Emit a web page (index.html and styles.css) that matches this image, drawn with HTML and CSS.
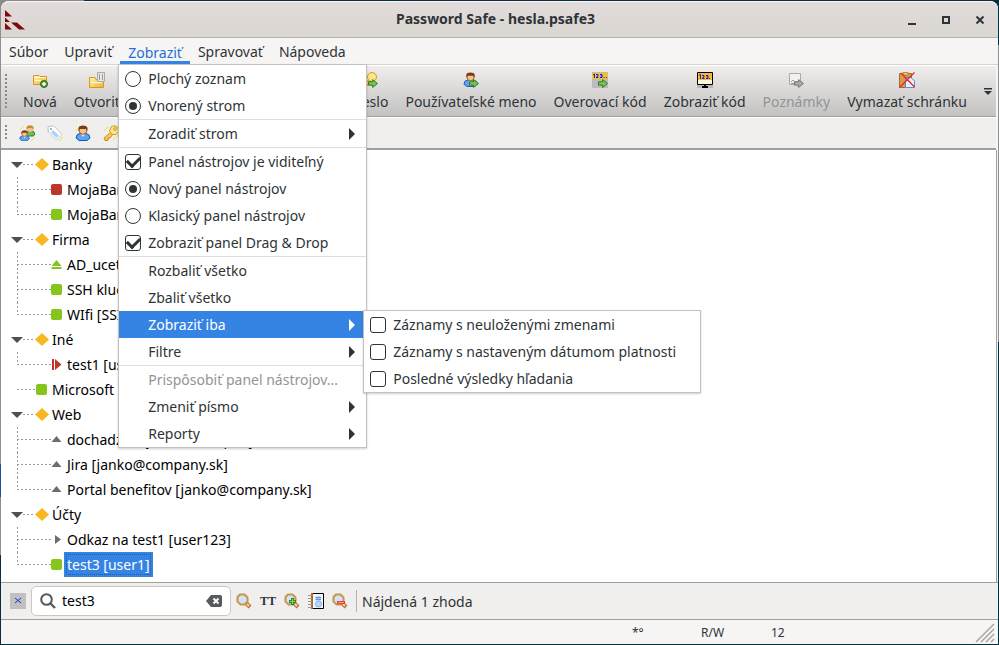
FILE: index.html
```html
<!DOCTYPE html>
<html lang="sk">
<head>
<meta charset="utf-8">
<title>Password Safe - hesla.psafe3</title>
<link rel="stylesheet" href="styles.css">
</head>
<body>
<svg class="defs" aria-hidden="true">
  <defs>
    <linearGradient id="gold" x1="0" y1="0" x2="1" y2="1"><stop offset="0" stop-color="#fff3b0"/><stop offset="1" stop-color="#f0b428"/></linearGradient>
    <symbol id="arrow" viewBox="0 0 10 9"><path d="M.5 2.8H4.6V.6L9.5 4.5 4.6 8.4V6.2H.5Z" fill="#7cc255" stroke="#2f7d1e"/></symbol>
    <symbol id="head" viewBox="0 0 16 16"><path d="M1 13Q1 9 5 8.500H11Q15 9 15 13L12 15.500H4Z" fill="#5aa5f2" stroke="#1b56b8"/><path d="M6 9L8 12 10 9Z" fill="#e9f2fc"/><circle cx="8" cy="5.500" r="3.800" fill="#f6c08c" stroke="#9a5a24"/><path d="M3.500 6V3Q4 .5 8 .5T12.500 3V6L11 4H5Z" fill="#7a3d14"/></symbol>
    <symbol id="lens" viewBox="0 0 16 16"><path d="M9.500 9.500L14 14" stroke="#b87333" stroke-width="4"/><path d="M11 11L13 13" stroke="#f6dc9a" stroke-width="2"/><path d="M4 1.500H8.500L11.500 4.500V8.500L8.500 11.500H4.500L1.500 8.500V4Z" fill="#cfe4f7" stroke="#c8964a" stroke-width="2"/></symbol>
  </defs>
</svg>
<main class="window">
  <header class="titlebar">
    <svg class="logo" viewBox="0 0 20 20" aria-hidden="true"><path d="M0 0L7 6.500H0ZM0 7.500L5 12H0ZM0 13L7 19.500H0ZM6 12.500H12L20 19.500H14Z" fill="#800a0a"/></svg>
    <h1>Password Safe - hesla.psafe3</h1>
    <div class="controls">
      <button aria-label="Minimalizovať"><svg viewBox="0 0 12 12"><path d="M2 9H10V11H2Z"/></svg></button>
      <button aria-label="Maximalizovať"><svg viewBox="0 0 12 12"><path fill-rule="evenodd" d="M2 2H10V10H2ZM4 4V8H8V4Z"/></svg></button>
      <button aria-label="Zavrieť"><svg viewBox="0 0 12 12"><path d="M2.500 2.500L9.500 9.500M9.500 2.500L2.500 9.500" stroke="#2e3436" stroke-width="2"/></svg></button>
    </div>
  </header>

  <nav class="menubar">
    <button>Súbor</button><button>Upraviť</button>
    <div class="open"><button class="active">Zobraziť</button>
      <div class="menu">
        <label class="item"><input type="radio" name="view"><span>Plochý zoznam</span></label>
        <label class="item"><input type="radio" name="view" checked><span>Vnorený strom</span></label>
        <hr>
        <button class="item sub">Zoradiť strom</button>
        <hr>
        <label class="item"><input type="checkbox" checked><span>Panel nástrojov je viditeľný</span></label>
        <label class="item"><input type="radio" name="bar" checked><span>Nový panel nástrojov</span></label>
        <label class="item"><input type="radio" name="bar"><span>Klasický panel nástrojov</span></label>
        <label class="item"><input type="checkbox" checked><span>Zobraziť panel Drag &amp; Drop</span></label>
        <hr>
        <button class="item">Rozbaliť všetko</button>
        <button class="item">Zbaliť všetko</button>
        <div class="open">
          <button class="item sub selected">Zobraziť iba</button>
          <div class="menu submenu">
            <label class="item"><input type="checkbox"><span>Záznamy s neuloženými zmenami</span></label>
            <label class="item"><input type="checkbox"><span>Záznamy s nastaveným dátumom platnosti</span></label>
            <label class="item"><input type="checkbox"><span>Posledné výsledky hľadania</span></label>
          </div>
        </div>
        <button class="item sub">Filtre</button>
        <hr>
        <button class="item" disabled>Prispôsobiť panel nástrojov...</button>
        <button class="item sub">Zmeniť písmo</button>
        <button class="item sub">Reporty</button>
      </div>
    </div>
    <button>Spravovať</button><button>Nápoveda</button>
  </nav>

  <div class="toolbar">
    <i class="grip"></i>
    <div class="group">
      <button><svg viewBox="0 0 16 16"><path d="M1.500 12.500V3.500H7L8 4.500H14.500V12.500Z" fill="url(#gold)" stroke="#d39a22"/><path d="M2 5.500H14M3 8.500H9" stroke="#fffbe2"/><circle cx="12" cy="12" r="3.500" fill="#4d9a35" stroke="#2d6b1e"/><path d="M10 12H14M12 10V14" stroke="#fff" stroke-width="1.500"/></svg>Nová</button>
      <button><svg viewBox="0 0 16 16"><path d="M.5 15.500V5.500H6L7 7.500H14.500V15.500Z" fill="url(#gold)" stroke="#d39a22"/><path d="M8.500 .5H15.500V9.500H8.500Z" fill="#e8e8e8" stroke="#aaa"/><path d="M10.500 2V8M13.500 2V8" stroke="#999"/><path d="M2 10.500H13" stroke="#fffbe2"/></svg>Otvoriť</button>
    </div>
    <div class="group">
      <button><svg viewBox="0 0 16 16"><path d="M3 9L1 14 4 15 9 9Z" fill="#f4c142" stroke="#b77d14"/><circle cx="10" cy="5" r="4.500" fill="#ffe38a" stroke="#d39a22"/><use href="#arrow" x="6" y="7" width="10" height="9"/></svg>Heslo</button>
      <button><svg viewBox="0 0 16 16"><use href="#head" width="15" height="15"/><use href="#arrow" x="6" y="7" width="10" height="9"/></svg>Používateľské meno</button>
      <button><svg viewBox="0 0 16 16"><path d="M0 0H16V16H0Z" fill="#bbb"/><path d="M0 1H16V7H0Z" fill="#f5c22e"/><path d="M1 3L2.500 2V6M4 2.500H6V4L4 5.500H6.500M8 2.500H10V5.500H8M8.500 4H10M11.500 5.500H12.500M14 5.500H15" fill="none" stroke="#1c1cd8"/><use href="#arrow" x="6" y="7" width="10" height="9"/></svg>Overovací kód</button>
      <button><svg viewBox="0 0 16 16"><path d="M0 13H16V16H0Z" fill="#b9b9b9"/><path d="M.5 .5H15.500V12.500H.5Z" fill="#fff6d8" stroke="#000"/><path d="M1 1H15V8H1Z" fill="#f8b92c"/><path d="M2 3L3.500 2.500V7M5 3.500H7V5L5 6.500H7.500M9 3.500H11V6.500H9M9.500 5H11M12 6.500H13" fill="none" stroke="#1c1cd8"/><path d="M7 12H9V14H11V16H5V14H7Z"/></svg>Zobraziť kód</button>
      <button disabled><svg viewBox="0 0 16 16"><path d="M1.500 1.500H12.500V12.500H1.500Z" fill="#f1f1f1" stroke="#aaa"/><path d="M3 10L5 8 7 10H12M3 11.500H10" fill="none" stroke="#999"/><path d="M6.500 9.800H10.600V7.600L15.500 11.500 10.600 15.400V13.200H6.500Z" fill="#aaa" stroke="#777"/></svg>Poznámky</button>
      <button><svg viewBox="0 0 16 16"><path d="M.5 1.500H12.500V15.500H.5Z" fill="#d99a4e" stroke="#a96a25"/><path d="M4 .5H9V3H4Z" fill="#e8d089" stroke="#b48b31"/><path d="M6.500 5.500H12L15.500 9V15.500H6.500Z" fill="#e6f1fd" stroke="#5a8ed6"/><path d="M.5 15.500L15.500 .5M2 1L15.500 15" stroke="#ee2424" stroke-width="1.300"/></svg>Vymazať schránku</button>
    </div>
    <button class="more" aria-label="Ďalšie nástroje"><svg viewBox="0 0 8 7"><path d="M0 0H8V1.500H0ZM0 3H8L4 7Z"/></svg></button>
  </div>

  <div class="dragbar">
    <i class="grip"></i>
    <svg viewBox="0 0 16 16"><path d="M1 5L5 1M12 16L16 12" stroke="#eee43a"/><path d="M7 10Q7 6 10 6H13Q16 6 15.500 10L14 11H8Z" fill="#6cbb5c" stroke="#3c7f2e"/><circle cx="11" cy="4" r="3" fill="#f6c08c"/><path d="M7.500 5V2L9 .5H13L14.500 2V5L13 3H9Z" fill="#c98a2a"/><use href="#head" y="5" width="11" height="11"/></svg>
    <svg viewBox="0 0 16 16"><path d="M12 16L16 12M0 6L1 4" stroke="#eee43a"/><path d="M1 1.500L7 1 15 9.500 9.500 15 1.500 7Z" fill="#fff" stroke="#b8c8d8"/><path d="M6 5L12 10.500 9.500 13 4 7.500Z" fill="#a9d3f3"/><circle cx="4" cy="4" r="1" fill="#8a98a8"/></svg>
    <svg viewBox="0 0 16 16"><path d="M1 12L5 8M12 16L15 13M1 6L5 1" stroke="#eee43a"/><use href="#head" width="16" height="16"/></svg>
    <svg viewBox="0 0 16 16"><path d="M10 15L15 10M1 6L5 2" stroke="#eee43a"/><path d="M8 7L1 13 2 15.500H5V13H7L10 9Z" fill="#f7ca55" stroke="#c88a1a"/><path d="M8 2L11 .5 15 2.500 15.500 6 13 9.500 9 9.500 6.500 6Z" fill="#ffe38a" stroke="#d39a22"/><circle cx="12" cy="4" r="1.300" fill="#fff" stroke="#c88a1a"/></svg>
  </div>

  <section class="tree">
    <ul>
      <li><div class="row group-row"><i class="diamond"></i><span>Banky</span></div>
        <ul>
          <li class="row"><i class="box red"></i><span>MojaBanka</span></li>
          <li class="row"><i class="box"></i><span>MojaBanka</span></li>
        </ul></li>
      <li><div class="row group-row"><i class="diamond"></i><span>Firma</span></div>
        <ul>
          <li class="row"><svg viewBox="0 0 11 11"><path d="M5.500 1L10.500 7H.5ZM.5 8H10.500V10H.5Z" fill="#86c61c"/></svg><span>AD_ucet</span></li>
          <li class="row"><i class="box"></i><span>SSH kluc</span></li>
          <li class="row"><i class="box"></i><span>WIfi [SSID]</span></li>
        </ul></li>
      <li><div class="row group-row"><i class="diamond"></i><span>Iné</span></div>
        <ul>
          <li class="row"><svg viewBox="0 0 11 11"><path d="M1 0H3V11H1ZM4 0L10.500 5.500 4 11Z" fill="#bd3728"/></svg><span>test1 [user]</span></li>
        </ul></li>
      <li class="row leaf"><i class="box"></i><span>Microsoft</span></li>
      <li><div class="row group-row"><i class="diamond"></i><span>Web</span></div>
        <ul>
          <li class="row"><svg viewBox="0 0 11 11"><path d="M5.500 2L10.500 8H.5Z" fill="#6d6d6d"/></svg><span>dochadzka [janko@company.sk]</span></li>
          <li class="row"><svg viewBox="0 0 11 11"><path d="M5.500 2L10.500 8H.5Z" fill="#6d6d6d"/></svg><span>Jira [janko@company.sk]</span></li>
          <li class="row"><svg viewBox="0 0 11 11"><path d="M5.500 2L10.500 8H.5Z" fill="#6d6d6d"/></svg><span>Portal benefitov [janko@company.sk]</span></li>
        </ul></li>
      <li><div class="row group-row"><i class="diamond"></i><span>Účty</span></div>
        <ul>
          <li class="row"><svg viewBox="0 0 11 11"><path d="M4 1V10L10 5.500Z" fill="#6d6d6d"/></svg><span>Odkaz na test1 [user123]</span></li>
          <li class="row"><i class="box"></i><span class="current">test3 [user1]</span></li>
        </ul></li>
    </ul>
  </section>

  <form class="searchbar">
    <button type="button" class="close" aria-label="Zavrieť hľadanie"><svg viewBox="0 0 16 16"><path d="M5 5L11 10M11 5L5 10" stroke="#1c2fe0"/></svg></button>
    <div class="entry">
      <svg viewBox="0 0 16 16"><circle cx="6.500" cy="6.500" r="5.300" fill="none" stroke="#555a5c" stroke-width="2"/><path d="M10.500 10.500L15 15" stroke="#555a5c" stroke-width="2.400"/></svg>
      <input type="text" value="test3" aria-label="Hľadať">
      <button type="button" aria-label="Vymazať"><svg viewBox="0 0 16 16"><path d="M5 2H14Q16 2 16 4V12Q16 14 14 14H5L0 8Z" fill="#555a5c"/><path d="M7.500 5.500L12.500 10.500M12.500 5.500L7.500 10.500" stroke="#fff" stroke-width="2"/></svg></button>
    </div>
    <div class="tools">
      <button type="button" aria-label="Hľadať"><svg viewBox="0 0 16 16"><use href="#lens"/></svg></button>
      <button type="button" class="case" aria-label="Rozlišovať veľkosť písmen">TT</button>
      <button type="button" aria-label="Ďalší"><svg viewBox="0 0 16 16"><use href="#lens"/><path d="M5 8.500H12M8.500 5V12" stroke="#2f8a25" stroke-width="3"/><path d="M6 8.500H11M8.500 6V11" stroke="#8ad46f"/></svg></button>
      <button type="button" aria-label="Správa"><svg viewBox="0 0 16 16"><path d="M4 .5H15.500V15.500H4Z" fill="#f2f7fe" stroke="#000"/><path d="M3 0H5V16H3Z" fill="#b8622e"/><path d="M0 2.500H4M0 5.500H4M0 8.500H4M0 11.500H4M0 14.500H4" stroke="#999"/><path d="M7.500 4.500H13M7.500 6.500H13" stroke="#5e94ea" stroke-width="1.500"/><circle cx="10.500" cy="11" r="3" fill="#bcd6f7" stroke="#8ab0e6"/></svg></button>
      <button type="button" aria-label="Zrušiť výsledky"><svg viewBox="0 0 16 16"><use href="#lens"/><path d="M5 9.500H13" stroke="#ef3a3a" stroke-width="3"/><path d="M6 9.500H12" stroke="#ff9b9b"/></svg></button>
    </div>
    <output>Nájdená 1 zhoda</output>
  </form>

  <footer class="status">
    <span>*°</span><span>R/W</span><span>12</span>
    <svg viewBox="0 0 20 20" aria-hidden="true"><path d="M1 19L19 1M6 19L19 6M11 19L19 11M16 19L19 16" stroke="#aaa7a3" stroke-width="1.500"/></svg>
  </footer>
</main>
</body>
</html>
```
FILE: styles.css
```css
* { box-sizing: border-box; }
body {
  margin: 0;
  height: 100vh;
  padding: 1px;
  background:
    linear-gradient(#8a8a8a, #8a8a8a) 0 0 / 84px 8px no-repeat,
    linear-gradient(#8f8f8f 72%, #1c4f96 72% 77%, #8f8f8f 77% 86%, #06303d 86%) 0 0 / 1px 100% no-repeat,
    linear-gradient(#06303d 7%, #8f8f8f 7% 53%, #06303d 53%) 100% 0 / 1px 100% no-repeat,
    #06303d;
  color: #2e3436;
  font: 14px/20px "Noto Sans", "Open Sans", sans-serif;
}
button, input { font: inherit; color: inherit; }
button { padding: 0; border: 0; background: none; }
svg { display: block; flex: none; width: 16px; height: 16px; }
ul { margin: 0; padding: 0; list-style: none; }
.defs { position: absolute; width: 0; height: 0; }

.window {
  display: flex;
  flex-direction: column;
  height: 100%;
  border-radius: 8px 8px 0 0;
  background: #f6f5f4;
}

/* Title bar */
.titlebar {
  display: grid;
  grid-template-columns: 1fr auto 1fr;
  align-items: center;
  height: 37px;
  padding: 0 12px 0 4px;
  border-top: 1px solid #f9f7f6;
  border-bottom: 1px solid #b8b2ab;
  border-radius: 8px 8px 0 0;
  background: linear-gradient(#e1dcdb, #dad6d1);
}
.titlebar h1 { margin: 0; font-size: 14px; line-height: 24px; padding-bottom: 2px; font-weight: 700; }
.logo { width: 20px; height: 20px; }
.controls { display: flex; gap: 22px; justify-content: flex-end; }
.controls svg { width: 12px; height: 12px; fill: #2e3436; }

/* Menus */
.menubar {
  display: flex;
  height: 27px;
  border-bottom: 1px solid #d5d2cf;
}
.menubar > button, .active { height: 26px; padding: 2px 8px 0; }
.active { border-bottom: 3px solid #3584e4; padding-top: 5px; color: #1f6fd6; }
.open { position: relative; }
.menu {
  position: absolute;
  z-index: 2;
  top: 100%;
  left: -2px;
  width: 249px;
  border: 1px solid #c4c2c0;
  background: #fff;
  box-shadow: 0 1px 2px #0003;
}
.menu hr { height: 1px; margin: 0; border: 0; background: #dedede; }
.item {
  display: flex;
  align-items: center;
  width: 100%;
  height: 27px;
  padding-left: 29px;
  text-align: left;
}
label.item { gap: 7px; padding-left: 6px; }
.item:disabled { color: #929595; }
.sub::after {
  content: "";
  margin: 0 11px 0 auto;
  border: solid transparent;
  border-width: 6px 0 6px 6px;
  border-left-color: currentColor;
}
.selected { background: #3584e4; color: #fff; }
.submenu { top: -1px; left: 244px; width: 338px; }
.item input {
  appearance: none;
  display: grid;
  place-items: center;
  flex: none;
  width: 16px;
  height: 16px;
  margin: 0;
  border: 1px solid #2e3436;
  border-radius: 3px;
}
.item input[type="radio"] { border-radius: 50%; }
.item input[type="radio"]:checked::after {
  content: "";
  width: 8px;
  height: 8px;
  border-radius: 50%;
  background: #2e3436;
}
.item input[type="checkbox"]:checked::after {
  content: "";
  width: 10px;
  height: 6px;
  margin-bottom: 3px;
  border: solid #2e3436;
  border-width: 0 0 3px 3px;
  transform: rotate(-45deg);
}

/* Tool bars */
.toolbar {
  display: flex;
  align-items: center;
  height: 52px;
  margin-right: 2px;
  padding: 0 4px;
  border-top: 1px solid #fff;
  border-bottom: 1px solid #a09f9e;
  background: linear-gradient(#efeeed, #c3c2c1);
}
.grip {
  flex: none;
  width: 2px;
  height: 34px;
  background: repeating-linear-gradient(#888 0 2px, transparent 2px 4px);
}
.group { display: flex; gap: 17px; }
.group + .group { margin-left: auto; }
.toolbar > .grip + .group { margin-left: 16px; }
.group button { display: grid; justify-items: center; gap: 4px; padding-top: 2px; }
.group button:disabled { color: #929595; }
.more { margin-left: 17px; }
.more svg { width: 8px; height: 7px; fill: #2e3436; }
.dragbar {
  display: flex;
  align-items: center;
  gap: 12px;
  height: 33px;
  margin-right: 2px;
  padding: 0 4px;
  border-top: 1px solid #fff;
  border-bottom: 2px solid #a09f9e;
  background: #f0efed;
}
.dragbar .grip { height: 16px; }

/* Entry tree */
.tree {
  flex: 1;
  min-height: 0;
  margin-right: 1px;
  padding: 2px 0 0 1px;
  border-right: 1px solid #a09f9e;
  background: #fff;
  color: #000;
}
.row { display: flex; align-items: center; height: 25px; padding-left: 15px; }
.row::before {
  content: "";
  width: 34px;
  height: 25px;
  background:
    repeating-linear-gradient(90deg, #999 0 2px, transparent 2px 4px) 0 12px / 34px 1px no-repeat,
    repeating-linear-gradient(#999 0 2px, transparent 2px 4px) 0 0 / 1px 100% no-repeat;
}
.row:last-child::before { background-size: 34px 1px, 1px 13px; }
.row > span { padding: 3px 3px 2px; }
.row svg { width: 11px; height: 11px; margin-right: 2px; }
.row.group-row { padding-left: 9px; }
.row.group-row::before {
  width: 24px;
  background: repeating-linear-gradient(90deg, #999 0 2px, transparent 2px 4px) 12px 12px / 12px 1px no-repeat;
}
.group-row::after {
  content: "";
  order: -1;
  margin-right: -12px;
  border: solid transparent;
  border-width: 6px 6px 0;
  border-top-color: #505050;
}
.row.leaf::before { width: 19px; background-size: 19px 1px, 0 0; }
.box { flex: none; width: 11px; height: 11px; margin-right: 2px; border-radius: 2px; background: #86c61c; }
.box.red { background: #bd3728; }
.diamond { flex: none; width: 14px; height: 13px; background: #f8b621; clip-path: polygon(50% 0, 100% 50%, 50% 100%, 0 50%); }
.current { background: #3584e4; color: #fff; outline: 1px dotted #245b9e; outline-offset: -3px; }

/* Search */
.searchbar {
  display: flex;
  align-items: center;
  height: 38px;
  padding-left: 9px;
  border-top: 1px solid #a09f9e;
  border-bottom: 1px solid #a09f9e;
  background: #f0efed;
}
.close { background: #c0c1be; }
.entry {
  display: flex;
  align-items: center;
  width: 200px;
  height: 30px;
  margin: 0 5px;
  padding: 0 8px;
  border: 1px solid #cdc7c2;
  border-radius: 5px;
  background: #fff;
}
.entry input { flex: 1; min-width: 0; padding: 0 6px; border: 0; outline: 0; background: none; color: #000; }
.tools { display: flex; gap: 8px; padding-right: 8px; border-right: 1px solid #b5b3b0; height: 22px; align-items: center; }
.case { width: 16px; font: 700 12px/16px "Liberation Serif", serif; }
.searchbar output { padding: 2px 0 0 5px; }

/* Status */
.status {
  display: grid;
  grid-template-columns: 69px 70px 1fr auto;
  align-items: center;
  height: 24px;
  padding: 2px 3px 0 631px;
  font-size: 12px;
}
.status svg { width: 20px; height: 20px; }
```
